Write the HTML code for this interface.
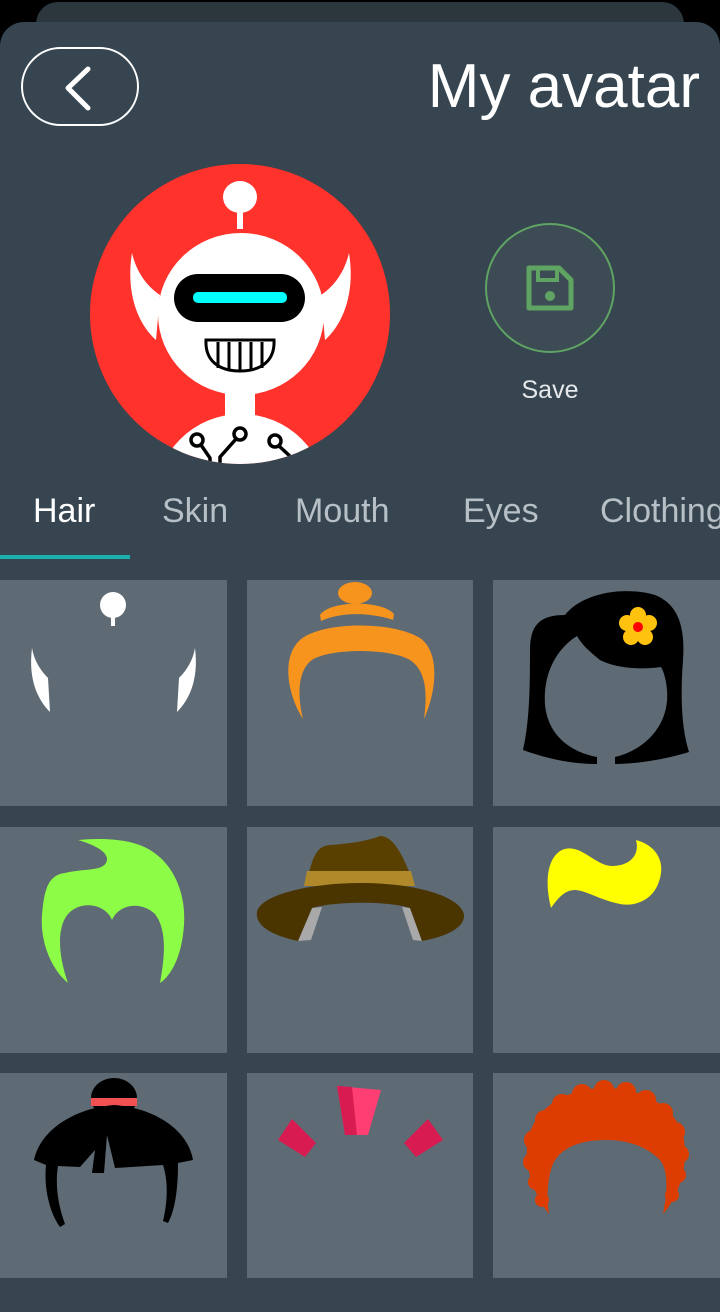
<!DOCTYPE html>
<html><head><meta charset="utf-8"><style>
*{margin:0;padding:0;box-sizing:border-box}
body{width:720px;height:1312px;background:#000;overflow:hidden;font-family:"Liberation Sans",Roboto,sans-serif;position:relative}
.back{position:absolute;left:36px;top:2px;width:648px;height:60px;background:#2c363d;border-radius:22px}
.panel{position:absolute;left:0;top:22px;width:720px;height:1290px;background:#36454f;border-radius:24px 24px 0 0}
.btn{position:absolute;left:21px;top:47px;width:118px;height:79px;border:2px solid #fff;border-radius:40px}
.title{position:absolute;right:20px;top:52px;color:#fff;font-size:62px;line-height:70px}
.tab{position:absolute;top:490px;font-size:34px;color:#b7c0c6;line-height:42px}
.ind{position:absolute;left:0;top:555px;width:130px;height:4px;background:#1ab0b0}
.tile{position:absolute;background:#5e6a74}
svg{position:absolute}
</style></head><body>
<div class="back"></div>
<div class="panel"></div>
<div class="btn"><svg width="118" height="79" style="left:-2px;top:-2px"><path d="M87 22 L67 41 L87 61" transform="translate(-20,0)" fill="none" stroke="#fff" stroke-width="5" stroke-linecap="round" stroke-linejoin="round"/></svg></div>
<div class="title">My avatar</div>

<svg width="720" height="480" style="left:0;top:0">
<defs><clipPath id="c"><circle cx="240" cy="314" r="150"/></clipPath></defs>
<circle cx="240" cy="314" r="150" fill="#ff322c"/>
<g clip-path="url(#c)">
<ellipse cx="241" cy="500" rx="86" ry="86" fill="#fff"/>
<rect x="225" y="380" width="30" height="40" fill="#fff"/>
<path d="M132 253 C126 290 136 322 156 340 L160 295 C145 285 136 270 132 253Z" fill="#fff"/>
<path d="M349 253 C355 290 345 322 325 340 L321 295 C336 285 345 270 349 253Z" fill="#fff"/>
<ellipse cx="241" cy="314" rx="83" ry="81" fill="#fff"/>
<rect x="174" y="274" width="131" height="48" rx="24" fill="#000"/>
<rect x="193" y="292" width="94" height="11" rx="5" fill="#0ff"/>
<path d="M206 340 H274 C275 360 262 371 240 371 C218 371 205 360 206 340Z" fill="#fff" stroke="#000" stroke-width="3"/>
<path d="M218 342V368M229 342V370M240 342V370M251 342V370M262 342V368" stroke="#000" stroke-width="3"/>
<rect x="237" y="205" width="6" height="24" fill="#fff"/>
<ellipse cx="240" cy="197" rx="17" ry="16" fill="#fff"/>
<g fill="none" stroke="#000" stroke-width="3.5">
<circle cx="197" cy="440" r="6"/><path d="M201 445 L210 458 V470"/>
<circle cx="240" cy="434" r="6"/><path d="M236 439 L220 457 V470"/>
<circle cx="275" cy="441" r="6"/><path d="M279 446 L292 458"/>
</g>
</g>
<circle cx="550" cy="288" r="64" fill="#3d4b55" stroke="#5fa463" stroke-width="2"/>
<path d="M529 268 H559 L571 280 V308 H529Z" fill="none" stroke="#5fa463" stroke-width="5" stroke-linejoin="round"/>
<path d="M538 268 V280 H557 V268" fill="none" stroke="#5fa463" stroke-width="4"/>
<circle cx="550" cy="296" r="5" fill="#5fa463"/>
<text x="550" y="398" fill="#e6e9eb" font-size="25" text-anchor="middle" font-family="Liberation Sans,sans-serif">Save</text>
</svg>

<div class="tab" style="left:33px;color:#fff">Hair</div>
<div class="tab" style="left:162px">Skin</div>
<div class="tab" style="left:295px">Mouth</div>
<div class="tab" style="left:463px">Eyes</div>
<div class="tab" style="left:600px">Clothing</div>
<div class="ind"></div>

<div class="tile" style="left:0;top:580px;width:227px;height:226px"></div>
<div class="tile" style="left:247px;top:580px;width:226px;height:226px"></div>
<div class="tile" style="left:493px;top:580px;width:227px;height:226px"></div>
<div class="tile" style="left:0;top:827px;width:227px;height:226px"></div>
<div class="tile" style="left:247px;top:827px;width:226px;height:226px"></div>
<div class="tile" style="left:493px;top:827px;width:227px;height:226px"></div>
<div class="tile" style="left:0;top:1073px;width:227px;height:205px"></div>
<div class="tile" style="left:247px;top:1073px;width:226px;height:205px"></div>
<div class="tile" style="left:493px;top:1073px;width:227px;height:205px"></div>

<svg width="720" height="1312" style="left:0;top:0">
<!-- white -->
<circle cx="113" cy="605" r="13" fill="#fff"/><rect x="111" y="614" width="4" height="12" fill="#fff"/>
<path d="M32 648 C28 680 38 700 50 712 L48 678 C40 670 34 660 32 648Z" fill="#fff"/>
<path d="M195 648 C199 680 189 700 177 712 L179 678 C187 670 193 660 195 648Z" fill="#fff"/>
<!-- orange -->
<ellipse cx="355" cy="593" rx="17" ry="11" fill="#f7941d"/>
<path d="M320 615 C330 600 382 600 394 614 L393 620 C370 612 340 612 321 621Z" fill="#f7941d"/>
<path d="M303 719 C285 690 283 655 300 640 C320 622 390 620 420 638 C440 652 437 690 424 719 C428 690 425 670 410 660 C390 648 330 648 312 660 C298 670 297 695 303 719Z" fill="#f7941d"/>
<!-- black long hair -->
<path d="M523 750 C530 720 530 680 530 650 C530 625 540 615 565 615 C580 595 620 585 655 595 C680 605 685 630 683 660 C680 700 682 730 689 752 C670 758 640 764 615 764 L597 764 C570 764 545 758 523 750Z" fill="#000"/>
<path d="M597 757 L597 770 L615 770 L615 757 C645 750 670 725 667 690 C666 680 664 672 661 667 C640 670 615 668 600 660 C590 652 582 645 577 636 C555 650 543 675 545 705 C548 735 570 752 597 757Z" fill="#5e6a74"/>
<g fill="#ffc20e"><circle cx="638" cy="615" r="8"/><circle cx="649" cy="623" r="8"/><circle cx="645" cy="637" r="8"/><circle cx="631" cy="637" r="8"/><circle cx="627" cy="623" r="8"/><circle cx="638" cy="627" r="8"/></g>
<circle cx="638" cy="627" r="5" fill="#f00"/>
<!-- green -->
<path d="M78 840 C100 838 130 838 150 850 C175 865 186 895 184 925 C182 955 172 975 160 983 C165 955 167 930 155 914 C140 900 118 905 112 920 C106 905 84 900 70 912 C56 925 58 955 68 983 C50 968 40 940 42 915 C44 890 48 875 65 873 C85 868 105 872 107 860 C108 852 95 845 78 840Z" fill="#8dfc46"/>
<!-- hat -->
<path d="M298 941 L312 908 L322 907 L311 940Z" fill="#a9a9a9"/>
<path d="M422 941 L410 908 L402 907 L413 940Z" fill="#a9a9a9"/>
<path d="M306 885 C312 860 315 846 330 845 C345 844 365 842 380 836 C395 836 405 860 414 885Z" fill="#5a4000"/>
<path d="M307 871 H411 L415 886 H304Z" fill="#b08a2a"/>
<path d="M298 941 C270 935 255 925 257 912 C260 895 310 883 360 883 C420 883 462 898 464 915 C465 928 445 937 422 941 L410 908 C390 901 335 901 312 908Z" fill="#4a3400"/>
<!-- yellow -->
<path d="M551 908 C545 885 546 858 562 850 C580 842 595 866 612 866 C630 866 640 855 636 840 C655 845 665 860 660 878 C655 900 635 907 620 904 C600 900 585 890 575 890 C565 890 558 898 551 908Z" fill="#ff0"/>
<!-- black bun -->
<ellipse cx="114" cy="1098" rx="23" ry="20" fill="#000"/>
<rect x="91" y="1098" width="46" height="8" fill="#f05050"/>
<path d="M34 1160 C40 1130 75 1108 114 1105 C155 1108 188 1130 193 1160 L178 1163 C178 1190 175 1210 168 1223 L163 1221 C168 1200 168 1180 163 1165 L115 1168 L107 1135 L104 1173 L92 1173 L95 1150 L80 1167 L58 1166 C55 1185 58 1205 65 1224 L60 1227 C48 1210 44 1185 46 1165Z" fill="#000"/>
<!-- pink -->
<path d="M337 1086 L381 1090 L368 1135 L345 1135Z" fill="#ff3f73"/>
<path d="M337 1086 L352 1087 L357 1135 L345 1135Z" fill="#d81b50"/>
<path d="M292 1119 L316 1143 L305 1157 L278 1140Z" fill="#d81b50"/>
<path d="M428 1119 L443 1140 L416 1157 L404 1143Z" fill="#d81b50"/>
<!-- orange curly -->
<g fill="#dd3d00">
<path d="M549 1214 C530 1190 524 1160 528 1140 C535 1105 570 1088 605 1088 C645 1088 678 1108 684 1140 C688 1165 680 1195 663 1214 C668 1190 668 1170 660 1160 C645 1145 625 1140 606 1140 C585 1140 565 1145 555 1160 C548 1172 546 1195 549 1214Z"/>
<circle cx="534" cy="1140" r="10"/><circle cx="532" cy="1162" r="9"/><circle cx="536" cy="1182" r="8"/><circle cx="542" cy="1200" r="7"/>
<circle cx="545" cy="1120" r="10"/><circle cx="562" cy="1104" r="10"/><circle cx="582" cy="1094" r="10"/><circle cx="604" cy="1090" r="10"/><circle cx="626" cy="1092" r="10"/><circle cx="646" cy="1100" r="10"/><circle cx="663" cy="1113" r="10"/><circle cx="675" cy="1132" r="10"/><circle cx="680" cy="1154" r="9"/><circle cx="678" cy="1175" r="8"/><circle cx="672" cy="1195" r="7"/>
</g>
</svg>
</body></html>
